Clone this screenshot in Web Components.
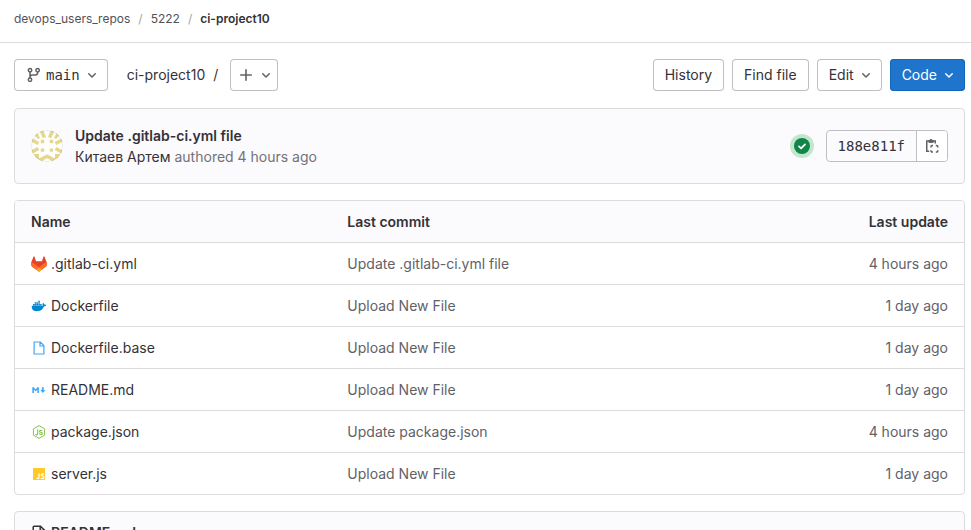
<!DOCTYPE html>
<html lang="en">
<head>
<meta charset="utf-8">
<meta name="viewport" content="width=device-width, initial-scale=1">
<title>ci-project10</title>
<style>
  html { scrollbar-width: none; }
  body {
    margin: 0;
    background: #fff;
    color: #333238;
    font: 14px/20px Inter, "Noto Sans", sans-serif;
    --border: #dcdcde;
    --control: #bfbfc3;
    --subtle: #737278;
    --panel: #fbfafd;
    --mono: "DejaVu Sans Mono", monospace;
  }
</style>
</head>
<body>
<repo-page></repo-page>

<script>
const ICONS = {
  chevron: ['0 0 16 16', '<path fill="currentColor" d="M4.22 6.22a.75.75 0 0 1 1.06 0L8 8.94l2.72-2.72a.75.75 0 1 1 1.06 1.06l-3.25 3.25a.75.75 0 0 1-1.06 0L4.22 7.28a.75.75 0 0 1 0-1.06z"/>'],
  plus: ['0 0 16 16', '<path d="M8 2.75v10.5M2.75 8h10.5" fill="none" stroke="currentColor" stroke-width="1.6" stroke-linecap="round"/>'],
  branch: ['0 0 16 16', '<g fill="none" stroke="currentColor" stroke-width="1.5"><circle cx="4" cy="3.2" r="1.7"/><circle cx="4" cy="12.8" r="1.7"/><circle cx="11.6" cy="3.2" r="1.7"/><path d="M4 5v6M11.6 5v.8a2.2 2.2 0 0 1-2.2 2.2H6.2A2.2 2.2 0 0 0 4 10.2"/></g>'],
  check: ['0 0 24 24', '<circle cx="12" cy="12" r="12" fill="#c3e6cd"/><circle cx="12" cy="12" r="8" fill="#108548"/><path d="M9 12.4l2.1 2 3.9-4" fill="none" stroke="#fff" stroke-width="1.8" stroke-linecap="round" stroke-linejoin="round"/>'],
  copy: ['0 0 16 16', '<g fill="none" stroke="currentColor" stroke-width="1.5"><path d="M5 3H2.75v10.25H5.2M9 3h2.25v2.4"/><path d="M4.9 4.6V2.2h.9a1.3 1.3 0 0 1 2.5 0h.9v2.4z" fill="currentColor" stroke="none"/><path d="M4.9 4.4V2.4h.9a1.3 1.3 0 0 1 2.5 0h.9v2z" stroke-width="1"/><path d="M7 9.4V8.7a1.2 1.2 0 0 1 1.2-1.2h.8M11.8 7.5h.8a1.2 1.2 0 0 1 1.2 1.2v.7M13.8 12.2v.7a1.2 1.2 0 0 1-1.2 1.2h-.8M9 14.1h-.8A1.2 1.2 0 0 1 7 12.9v-.7"/></g>'],
  gitlab: ['0 0 25 24', '<path fill="#e24329" d="m24.507 9.5-.034-.09L21.082.562a.896.896 0 0 0-1.694.091l-2.29 7.01H7.825L5.535.653a.898.898 0 0 0-1.694-.09L.451 9.411.416 9.5a6.297 6.297 0 0 0 2.09 7.278l.012.01.03.022 5.16 3.867 2.56 1.935 1.554 1.176a1.051 1.051 0 0 0 1.268 0l1.555-1.176 2.56-1.935 5.197-3.89.014-.01A6.297 6.297 0 0 0 24.507 9.5Z"/><path fill="#fc6d26" d="m24.507 9.5-.034-.09a11.44 11.44 0 0 0-4.56 2.051l-7.447 5.632 4.742 3.584 5.197-3.89.014-.01A6.297 6.297 0 0 0 24.507 9.5Z"/><path fill="#fca326" d="m7.707 20.677 2.56 1.935 1.555 1.176a1.051 1.051 0 0 0 1.268 0l1.555-1.176 2.56-1.935-4.743-3.584-4.755 3.584Z"/><path fill="#fc6d26" d="M5.01 11.461a11.43 11.43 0 0 0-4.56-2.05L.416 9.5a6.297 6.297 0 0 0 2.09 7.278l.012.01.03.022 5.16 3.867 4.745-3.584-7.444-5.632Z"/>'],
  docker: ['1 1 22 22', '<path fill="#0288d1" d="M21.81 10.25c-.06-.04-.56-.43-1.64-.43-.28 0-.56.03-.84.08-.21-1.4-1.38-2.11-1.43-2.14l-.29-.17-.18.27c-.24.36-.43.77-.51 1.19-.2.8-.08 1.56.33 2.21-.49.28-1.29.35-1.46.35H2.62c-.34 0-.62.28-.62.63 0 1.15.18 2.3.58 3.38.45 1.19 1.13 2.07 2 2.61.98.6 2.59.94 4.42.94.79 0 1.61-.07 2.42-.22 1.12-.2 2.2-.59 3.19-1.16A8.3 8.3 0 0 0 16.78 16c1.05-1.17 1.67-2.5 2.12-3.65h.19c1.14 0 1.85-.46 2.24-.85.26-.24.45-.53.59-.87l.08-.24zM3.7 9.3h2.1v1.9H3.7zM6.1 9.3h2.1v1.9H6.1zM8.6 9.3h2.1v1.9H8.6zM11.1 9.3h2.1v1.9h-2.1zM13.5 9.3h2.1v1.9h-2.1zM6.1 7h2.1v1.9H6.1zM8.6 7h2.1v1.9H8.6zM11.1 7h2.1v1.9h-2.1zM11.1 4.8h2.1v1.8h-2.1z"/>'],
  file: ['0 0 16 16', '<path d="M3.1 2h6.3l3.5 3.6V14H3.1zM9 2.2V6h3.7" fill="none" stroke="#42a5f5" stroke-width="1.2"/>'],
  markdown: ['0 0 16 16', '<path fill="#42a5f5" d="M1.3 11V5.2h1.6l1.7 2.2 1.7-2.2h1.6V11H6.3V7.5L4.6 9.6 2.9 7.5V11zM10.9 5.2h1.8v2.7h1.6L11.8 11 9.3 7.9h1.6z"/>'],
  node: ['0 0 16 16', '<g fill="none" stroke="#8bc34a" stroke-linejoin="round"><path d="M8 1.6l5.6 3.2v6.4L8 14.4l-5.6-3.2V4.8z"/><path stroke-width="1.1" d="M6.7 5.3v4.3q0 1.3-1.2 1.3-.8 0-1.1-.7M11.3 6.5H9.7q-1.2 0-1.2.9 0 .8 1.3.9 1.6.1 1.6 1.1 0 1-1.5 1-1.4 0-1.6-1"/></g>'],
  js: ['0 0 16 16', '<path fill="#ffca28" d="M2 2h12v12H2z"/><path fill="none" stroke="#fff" stroke-width="1.2" d="M8 7.5v3.9q0 1.2-1.1 1.2-.8 0-1.2-.8M12.8 8.5q-.4-.6-1.2-.6-1.2 0-1.2 1 0 .8 1.2 1.1 1.4.3 1.4 1.3 0 1.3-1.5 1.3-1.1 0-1.5-.9"/>'],
  document: ['0 0 16 16', '<path d="M4.5 13.8H3.2a1 1 0 0 1-1-1V2.2a1 1 0 0 1 1-1h6.3l4.1 4.1v7.5a1 1 0 0 1-1 1H4.5zM9.2 1.4v4.1h4.2M5 8.5h6M5 11h6" fill="none" stroke="currentColor" stroke-width="1.5"/>'],
  avatar: ['0 0 32 32', '<clipPath id="c"><circle cx="16" cy="16" r="16"/></clipPath><g clip-path="url(#c)"><path fill="#fff" d="M0 0h32v32H0z"/><g fill="none" stroke="#e6d78e" stroke-width="3.6"><path d="M9.5-1l4 8.5M22.5-1l-4 8.5M-1 9l8.5 4.5M33 9l-8.5 4.5M-1 23l8.5-4.5M33 23l-8.5-4.5M8 30.5l8-4.3 8 4.3"/></g><path fill="#e6d78e" d="M9.8 9.8h3.4v3.4H9.8zM18.8 9.8h3.4v3.4h-3.4zM9.8 18.4h3.4v3.4H9.8zM18.8 18.4h3.4v3.4h-3.4zM3 5l3-3 3 6-2 1zM29 5l-3-3-3 6 2 1zM3 24h5v5H5zM29 24h-5v5h3z"/></g><circle cx="16" cy="16" r="15.5" fill="none" stroke="#1f1e24" stroke-opacity=".09"/>']
};

function define(name, html, setup) {
  const template = document.createElement('template');
  template.innerHTML = html;
  customElements.define(name, class extends HTMLElement {
    constructor() {
      super();
      this.attachShadow({ mode: 'open' }).append(template.content.cloneNode(true));
    }
    connectedCallback() { if (setup) setup(this, this.shadowRoot); }
  });
}

define('app-icon', `
  <style>
    :host { display: inline-flex; flex: none; width: 16px; height: 16px; }
    svg { width: 100%; height: 100%; }
  </style>
  <svg aria-hidden="true"></svg>`, (el, root) => {
  const [box, shapes] = ICONS[el.getAttribute('name')];
  const svg = root.querySelector('svg');
  svg.setAttribute('viewBox', box);
  svg.innerHTML = shapes;
});

define('app-button', `
  <style>
    :host { display: inline-flex; }
    button {
      display: flex; align-items: center; gap: 4px; box-sizing: border-box; height: 32px;
      margin: 0; padding: 0 12px; border: 0; border-radius: 4px; background: #fff;
      box-shadow: inset 0 0 0 1px var(--control); color: #333238; font: inherit;
      white-space: nowrap; cursor: pointer;
    }
    :host([menu]) button { padding-right: 8px; }
    :host([compact]) button { padding: 0 4px 0 8px; }
    :host([mono]) button { font-family: var(--mono); }
    :host([primary]) button { background: #1f75cb; box-shadow: inset 0 0 0 1px #1068bf; color: #fff; }
    app-icon, ::slotted(app-icon) { color: #626168; }
    :host([primary]) app-icon { color: #fff; }
    :host(:not([menu])) .chevron { display: none; }
  </style>
  <button type="button"><slot></slot><app-icon class="chevron" name="chevron"></app-icon></button>`,
  (el, root) => {
    const label = el.getAttribute('label');
    if (label) root.querySelector('button').setAttribute('aria-label', label);
  });

define('repo-breadcrumbs', `
  <style>
    :host { display: block; border-bottom: 1px solid var(--border); font-size: 12px; line-height: 16px; }
    nav { display: flex; gap: 8px; padding: 11px 14px 15px; }
    a { color: #535158; text-decoration: none; }
    a[aria-current] { color: #333238; font-weight: 600; }
    span { color: #a4a3a8; }
  </style>
  <nav aria-label="Breadcrumbs">
    <a href="#">devops_users_repos</a><span>/</span><a href="#">5222</a><span>/</span><a href="#" aria-current="page">ci-project10</a>
  </nav>`);

define('repo-toolbar', `
  <style>
    :host { display: flex; justify-content: space-between; align-items: center; padding-bottom: 1px; }
    div { display: flex; align-items: center; gap: 8px; }
    .path { gap: 19px; }
    .add { margin-left: 4px; }
    a { color: #333238; text-decoration: none; }
  </style>
  <div class="path">
    <app-button menu mono><app-icon name="branch"></app-icon>main</app-button>
    <div><a href="#">ci-project10</a><span>/</span>
      <app-button class="add" menu compact label="Add to tree"><app-icon name="plus"></app-icon></app-button></div>
  </div>
  <div>
    <app-button>History</app-button><app-button>Find file</app-button>
    <app-button menu>Edit</app-button><app-button menu primary>Code</app-button>
  </div>`);

define('last-commit', `
  <style>
    :host {
      display: flex; align-items: center; gap: 12px; padding: 16px; border: 1px solid var(--border);
      border-radius: 4px; background: var(--panel);
    }
    .avatar { width: 32px; height: 32px; }
    .text { flex: 1; line-height: 21px; color: var(--subtle); }
    a { color: #333238; text-decoration: none; }
    .title { display: block; font-weight: 600; }
    .status { width: 24px; height: 24px; }
    .sha { display: flex; height: 32px; box-sizing: border-box; border: 1px solid var(--control); border-radius: 4px; overflow: hidden; }
    .sha span { padding: 0 11px; font: 14px/30px var(--mono); }
    button {
      display: flex; align-items: center; margin: 0; padding: 0 7px; border: 0;
      border-left: 1px solid var(--control); background: #fff; color: #626168; cursor: pointer;
    }
  </style>
  <app-icon class="avatar" name="avatar"></app-icon>
  <div class="text">
    <a class="title" href="#">Update .gitlab-ci.yml file</a>
    <a href="#">Китаев Артем</a> authored <time>4 hours ago</time>
  </div>
  <app-icon class="status" name="check"></app-icon>
  <div class="sha"><span>188e811f</span><button type="button" aria-label="Copy commit SHA"><app-icon name="copy"></app-icon></button></div>`);

const FILES = [
  ['gitlab', '.gitlab-ci.yml', 'Update .gitlab-ci.yml file', '4 hours ago'],
  ['docker', 'Dockerfile', 'Upload New File', '1 day ago'],
  ['file', 'Dockerfile.base', 'Upload New File', '1 day ago'],
  ['markdown', 'README.md', 'Upload New File', '1 day ago'],
  ['node', 'package.json', 'Update package.json', '4 hours ago'],
  ['js', 'server.js', 'Upload New File', '1 day ago']
];

define('file-table', `
  <style>
    :host { display: block; border: 1px solid var(--border); border-radius: 4px; overflow: hidden; }
    table { width: 100%; table-layout: fixed; border-collapse: separate; border-spacing: 0; }
    th, td { height: 41px; padding: 0 16px; text-align: left; font-weight: 400; line-height: 20px; }
    thead th { background: var(--panel); font-weight: 600; }
    tbody th, tbody td { border-top: 1px solid var(--border); color: #626168; }
    th:last-child, td:last-child { text-align: right; }
    a { color: inherit; text-decoration: none; }
    .name { display: flex; align-items: center; gap: 4px; color: #333238; }
  </style>
  <table>
    <thead><tr><th scope="col">Name</th><th scope="col">Last commit</th><th scope="col">Last update</th></tr></thead>
    <tbody></tbody>
  </table>`, (el, root) => {
  root.querySelector('tbody').innerHTML = FILES.map(([icon, name, commit, date]) =>
    `<tr><th scope="row"><a class="name" href="#"><app-icon name="${icon}"></app-icon>${name}</a></th>` +
    `<td><a href="#">${commit}</a></td><td><time>${date}</time></td></tr>`).join('');
});

define('readme-panel', `
  <style>
    :host { display: block; border: 1px solid var(--border); border-radius: 4px; background: var(--panel); }
    a { display: flex; align-items: center; gap: 4px; padding: 11px 16px; color: #333238; font-weight: 600; text-decoration: none; }
  </style>
  <a href="#"><app-icon name="document"></app-icon>README.md</a>`);

define('repo-page', `
  <style>
    :host { display: block; }
    main { display: flex; flex-direction: column; gap: 16px; padding: 16px 6px 0 14px; }
  </style>
  <repo-breadcrumbs></repo-breadcrumbs>
  <main>
    <repo-toolbar></repo-toolbar>
    <last-commit></last-commit>
    <file-table></file-table>
    <readme-panel></readme-panel>
  </main>`);
</script>
</body>
</html>
